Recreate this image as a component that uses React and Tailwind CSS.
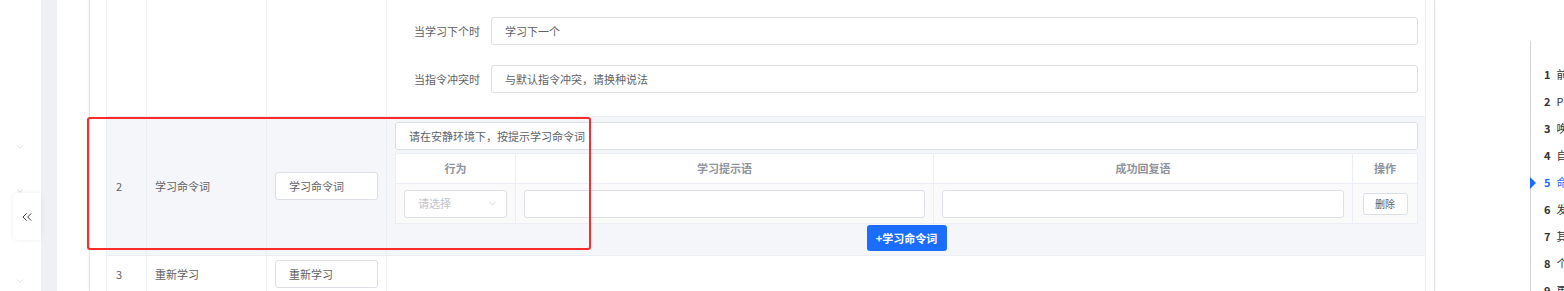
import React from "react";
import { ChevronDown, ChevronsLeft } from "lucide-react";

const font = "font-['Noto_Sans_CJK_SC','Noto_Sans',sans-serif]";

const navItems = ["前言", "Prompt", "唤醒词", "自定义", "命令词", "发音人", "其他", "个性化", "更多"];

const InputBox = ({ value, placeholder, className = "" }) => (
  <div
    className={`flex h-[28px] items-center rounded-[3px] border border-[#dcdfe6] bg-white px-[13px] text-[11px] text-[#606266] ${className}`}
  >
    {value || <span className="text-[#c0c4cc]">{placeholder}</span>}
  </div>
);

const LeftRail = () => (
  <aside className="relative w-[41px] shrink-0 bg-white">
    {[142, 186, 231, 276].map((top) => (
      <ChevronDown
        key={top}
        size={10}
        strokeWidth={1.5}
        className="absolute left-[15px] text-[#c8cbd3]"
        style={{ top }}
      />
    ))}
    {/* collapse handle */}
    <div className="absolute left-[13px] top-[193px] flex h-[47px] w-[28px] items-center justify-center rounded-l-[5px] bg-white/90 shadow-[0_0_4px_rgba(0,0,0,0.08)]">
      <ChevronsLeft size={16} strokeWidth={1.4} className="text-[#333]" />
    </div>
  </aside>
);

const FieldRow = ({ label, value }) => (
  <div className="flex items-center">
    <div className="w-[96px] shrink-0 pr-[11px] text-right text-[11px] text-[#606266]">{label}</div>
    <InputBox value={value} className="flex-1" />
  </div>
);

const CommandTable = () => (
  <div className="border-l border-t border-[#ebeef5] bg-white">
    <div className="grid h-[30px] grid-cols-[120px_418px_419px_1fr] border-b border-[#ebeef5] text-[11px] font-bold text-[#909399]">
      <div className="flex items-center justify-center border-r border-[#ebeef5]">行为</div>
      <div className="flex items-center justify-center border-r border-[#ebeef5]">学习提示语</div>
      <div className="flex items-center justify-center border-r border-[#ebeef5]">成功回复语</div>
      <div className="flex items-center justify-center border-r border-[#ebeef5]">操作</div>
    </div>
    <div className="grid h-[40px] grid-cols-[120px_418px_419px_1fr] border-b border-[#ebeef5] bg-[#fafafa]">
      <div className="flex items-center border-r border-[#ebeef5] pl-[8px]">
        <div className="flex h-[28px] w-[103px] items-center justify-between rounded-[3px] border border-[#dcdfe6] bg-white pl-[13px] pr-[8px] text-[11px] text-[#c0c4cc]">
          请选择
          <ChevronDown size={11} strokeWidth={1.5} className="text-[#c0c4cc]" />
        </div>
      </div>
      <div className="flex items-center border-r border-[#ebeef5] px-[8px]">
        <InputBox className="w-full" />
      </div>
      <div className="flex items-center border-r border-[#ebeef5] px-[8px]">
        <InputBox className="w-full" />
      </div>
      <div className="flex items-center justify-center border-r border-[#ebeef5]">
        <button className="h-[22px] w-[45px] rounded-[3px] border border-[#dcdfe6] bg-white text-[10px] text-[#606266]">
          删除
        </button>
      </div>
    </div>
  </div>
);

const RightNav = () => (
  <nav className="flex flex-1 flex-col pl-[95px] pt-[41px]">
    <div className="relative flex-1 border-l border-[#d0d3d9] pl-[13px] pt-[20px]">
      {navItems.map((item, i) => (
        <div
          key={item}
          className={`relative flex h-[27px] items-center gap-[6px] whitespace-nowrap text-[11px] ${
            i === 4 ? "text-[#1a6dff]" : "text-[#333]"
          }`}
        >
          {i === 4 && (
            <span className="absolute -left-[14px] h-0 w-0 border-y-[6px] border-l-[6px] border-y-transparent border-l-[#1a6dff]" />
          )}
          <span className="font-bold">{i + 1}</span>
          <span>{item}</span>
        </div>
      ))}
    </div>
  </nav>
);

export default function App() {
  return (
    <div className={`relative flex h-[291px] w-[1564px] overflow-hidden bg-white ${font}`}>
      <LeftRail />
      <div className="w-[16px] shrink-0 bg-[#eef0f5]" />

      <main className="shrink-0 pl-[32px]">
        <div className="h-full w-[1346px] border-x border-[#e2e4ea] pl-[16px] pr-[8px] shadow-[0_0_3px_rgba(0,0,0,0.06)]">
          <div className="border-l border-[#ebeef5] text-[11px] text-[#606266]">
            {/* row 1 (scrolled, partly hidden) */}
            <div className="grid h-[117px] grid-cols-[40px_120px_120px_1fr] border-b border-[#ebeef5]">
              <div className="border-r border-[#ebeef5]" />
              <div className="border-r border-[#ebeef5]" />
              <div className="border-r border-[#ebeef5]" />
              <div className="flex flex-col gap-[20px] border-r border-[#ebeef5] pl-[8px] pr-[7px] pt-[17px]">
                <FieldRow label="当学习下个时" value="学习下一个" />
                <FieldRow label="当指令冲突时" value="与默认指令冲突，请换种说法" />
              </div>
            </div>

            {/* row 2 */}
            <div className="grid h-[139px] grid-cols-[40px_120px_120px_1fr] border-b border-[#ebeef5] bg-[#f5f6f9]">
              <div className="flex items-center border-r border-[#ebeef5] pl-[9px]">2</div>
              <div className="flex items-center border-r border-[#ebeef5] pl-[8px]">学习命令词</div>
              <div className="flex items-center border-r border-[#ebeef5] pl-[8px]">
                <InputBox value="学习命令词" className="w-[103px]" />
              </div>
              <div className="flex flex-col border-r border-[#ebeef5] pl-[8px] pr-[7px] pt-[5px]">
                <InputBox value="请在安静环境下，按提示学习命令词" />
                <div className="mt-[3px]">
                  <CommandTable />
                </div>
                <div className="flex justify-center pt-[1px]">
                  <button className="h-[26px] w-[80px] rounded-[3px] bg-[#1a6dff] text-[11px] font-bold text-white">
                    +学习命令词
                  </button>
                </div>
              </div>
            </div>

            {/* row 3 */}
            <div className="grid h-[40px] grid-cols-[40px_120px_120px_1fr]">
              <div className="border-r border-[#ebeef5] pl-[9px] pt-[10px]">3</div>
              <div className="border-r border-[#ebeef5] pl-[8px] pt-[10px]">重新学习</div>
              <div className="border-r border-[#ebeef5] pl-[8px] pt-[4px]">
                <InputBox value="重新学习" className="w-[103px]" />
              </div>
              <div className="border-r border-[#ebeef5]" />
            </div>
          </div>
        </div>
      </main>

      <RightNav />

      {/* annotation frame */}
      <div className="pointer-events-none absolute left-[87px] top-[117px] h-[133px] w-[504px] rounded-[3px] border-2 border-[#ff2b2b]" />
    </div>
  );
}
